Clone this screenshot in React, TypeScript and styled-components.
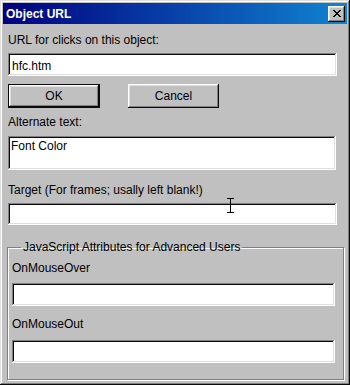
import styled, { createGlobalStyle, css } from 'styled-components'

const GlobalStyle = createGlobalStyle`
  body {
    margin: 0;
    font-family: "Liberation Sans", Arial, sans-serif;
  }
`

const raised = css`
  box-shadow:
    inset -1px -1px #0a0a0a,
    inset 1px 1px #ffffff,
    inset -2px -2px #808080,
    inset 2px 2px #dfdfdf;
`

const sunken = css`
  box-shadow:
    inset -1px -1px #ffffff,
    inset 1px 1px #808080,
    inset -2px -2px #dfdfdf,
    inset 2px 2px #0a0a0a;
`

export default function App () {
  return (
    <>
      <GlobalStyle />
      <Window>
        <TitleBar>
          <span>Object URL</span>
          <CloseButton aria-label="Close">
            <svg width="8" height="7" viewBox="0 0 8 7">
              <path d="M0 0h2v1h1v1h2V1h1V0h2v1H7v1H6v1H5v1h1v1h1v1h1v1H6V6H5V5H3v1H2v1H0V6h1V5h1V4h1V3H2V2H1V1H0z" fill="#000" />
            </svg>
          </CloseButton>
        </TitleBar>

        <Content>
          <Label $top={9}>URL for clicks on this object:</Label>
          <Field $top={6} $height={23} defaultValue="hfc.htm" />

          <ButtonRow>
            <Button $default>OK</Button>
            <Button>Cancel</Button>
          </ButtonRow>

          <Label $top={7}>Alternate text:</Label>
          <TextArea defaultValue="Font Color" />

          <Label $top={13}>Target (For frames; usally left blank!)</Label>
          <TargetWrap>
            <Field $top={0} $height={22} />
            <Cursor width="7" height="15" viewBox="0 0 7 15">
              <path d="M0 0.5h2.5M4.5 0.5h2.5M3.5 1v13M0 14.5h2.5M4.5 14.5h2.5M2 0.5h3M2 14.5h3" stroke="#000" strokeWidth="1" fill="none" />
            </Cursor>
          </TargetWrap>

          <Group>
            <Legend>JavaScript Attributes for Advanced Users</Legend>
            <Label $top={0}>OnMouseOver</Label>
            <Field $top={8} $height={23} $width={323} />
            <Label $top={11}>OnMouseOut</Label>
            <Field $top={9} $height={23} $width={323} />
          </Group>
        </Content>
      </Window>
    </>
  )
}

const Window = styled.div`
  position: relative;
  box-sizing: border-box;
  width: 350px;
  height: 385px;
  padding: 3px;
  background-color: #c0c0c0;
  box-shadow:
    inset -1px -1px #0a0a0a,
    inset 1px 1px #dfdfdf,
    inset -2px -2px #808080,
    inset 2px 2px #ffffff;
`

const TitleBar = styled.div`
  display: flex;
  align-items: center;
  justify-content: space-between;
  height: 21px;
  padding: 0 2px 0 3px;
  background: linear-gradient(90deg, #000080, #1084d0);
  color: #ffffff;
  font-weight: bold;
  font-size: 12px;
`

const CloseButton = styled.button`
  display: flex;
  align-items: center;
  justify-content: center;
  box-sizing: border-box;
  width: 17px;
  height: 16px;
  padding: 0;
  border: none;
  background-color: #c0c0c0;
  ${raised}
`

const Content = styled.div`
  padding: 0 5px;
`

const Label = styled.div<{ $top: number }>`
  margin-top: ${p => p.$top}px;
  height: 14px;
  line-height: 14px;
  font-size: 12px;
  color: #000000;
  white-space: nowrap;
`

const Field = styled.input<{ $top: number, $height: number, $width?: number }>`
  display: block;
  box-sizing: border-box;
  margin-top: ${p => p.$top}px;
  width: ${p => p.$width ?? 329}px;
  height: ${p => p.$height}px;
  padding: 2px 4px 0;
  border: none;
  outline: none;
  background-color: #ffffff;
  font-family: inherit;
  font-size: 12px;
  color: #000000;
  ${sunken}
`

const TextArea = styled.textarea`
  display: block;
  box-sizing: border-box;
  margin-top: 7px;
  width: 328px;
  height: 34px;
  padding: 3px 3px;
  border: none;
  outline: none;
  resize: none;
  overflow: hidden;
  background-color: #ffffff;
  font-family: inherit;
  font-size: 12px;
  line-height: 14px;
  color: #000000;
  ${sunken}
`

const ButtonRow = styled.div`
  display: flex;
  gap: 28px;
  margin-top: 8px;
`

const Button = styled.button<{ $default?: boolean }>`
  box-sizing: border-box;
  width: ${p => (p.$default ? 92 : 91)}px;
  height: 24px;
  padding: 0;
  border: none;
  background-color: #c0c0c0;
  font-family: inherit;
  font-size: 12px;
  color: #000000;
  ${raised}
  ${p => p.$default && css`
    box-shadow:
      inset 0 0 0 1px #0a0a0a,
      inset -2px -2px #0a0a0a,
      inset 2px 2px #ffffff,
      inset -3px -3px #808080,
      inset 3px 3px #dfdfdf;
  `}
`

const TargetWrap = styled.div`
  position: relative;
  margin-top: 6px;
`

const Cursor = styled.svg`
  position: absolute;
  left: 219px;
  top: -5px;
`

const Group = styled.fieldset`
  box-sizing: border-box;
  width: 337px;
  height: 140px;
  margin: 15px 0 0 -1px;
  padding: 7px 4px 0 4px;
  border: 1px solid #808080;
  box-shadow: inset 1px 1px #ffffff, 1px 1px #ffffff;
`

const Legend = styled.legend`
  margin-left: 9px;
  padding: 0 2px;
  height: 14px;
  line-height: 14px;
  font-size: 12px;
  color: #000000;
`
